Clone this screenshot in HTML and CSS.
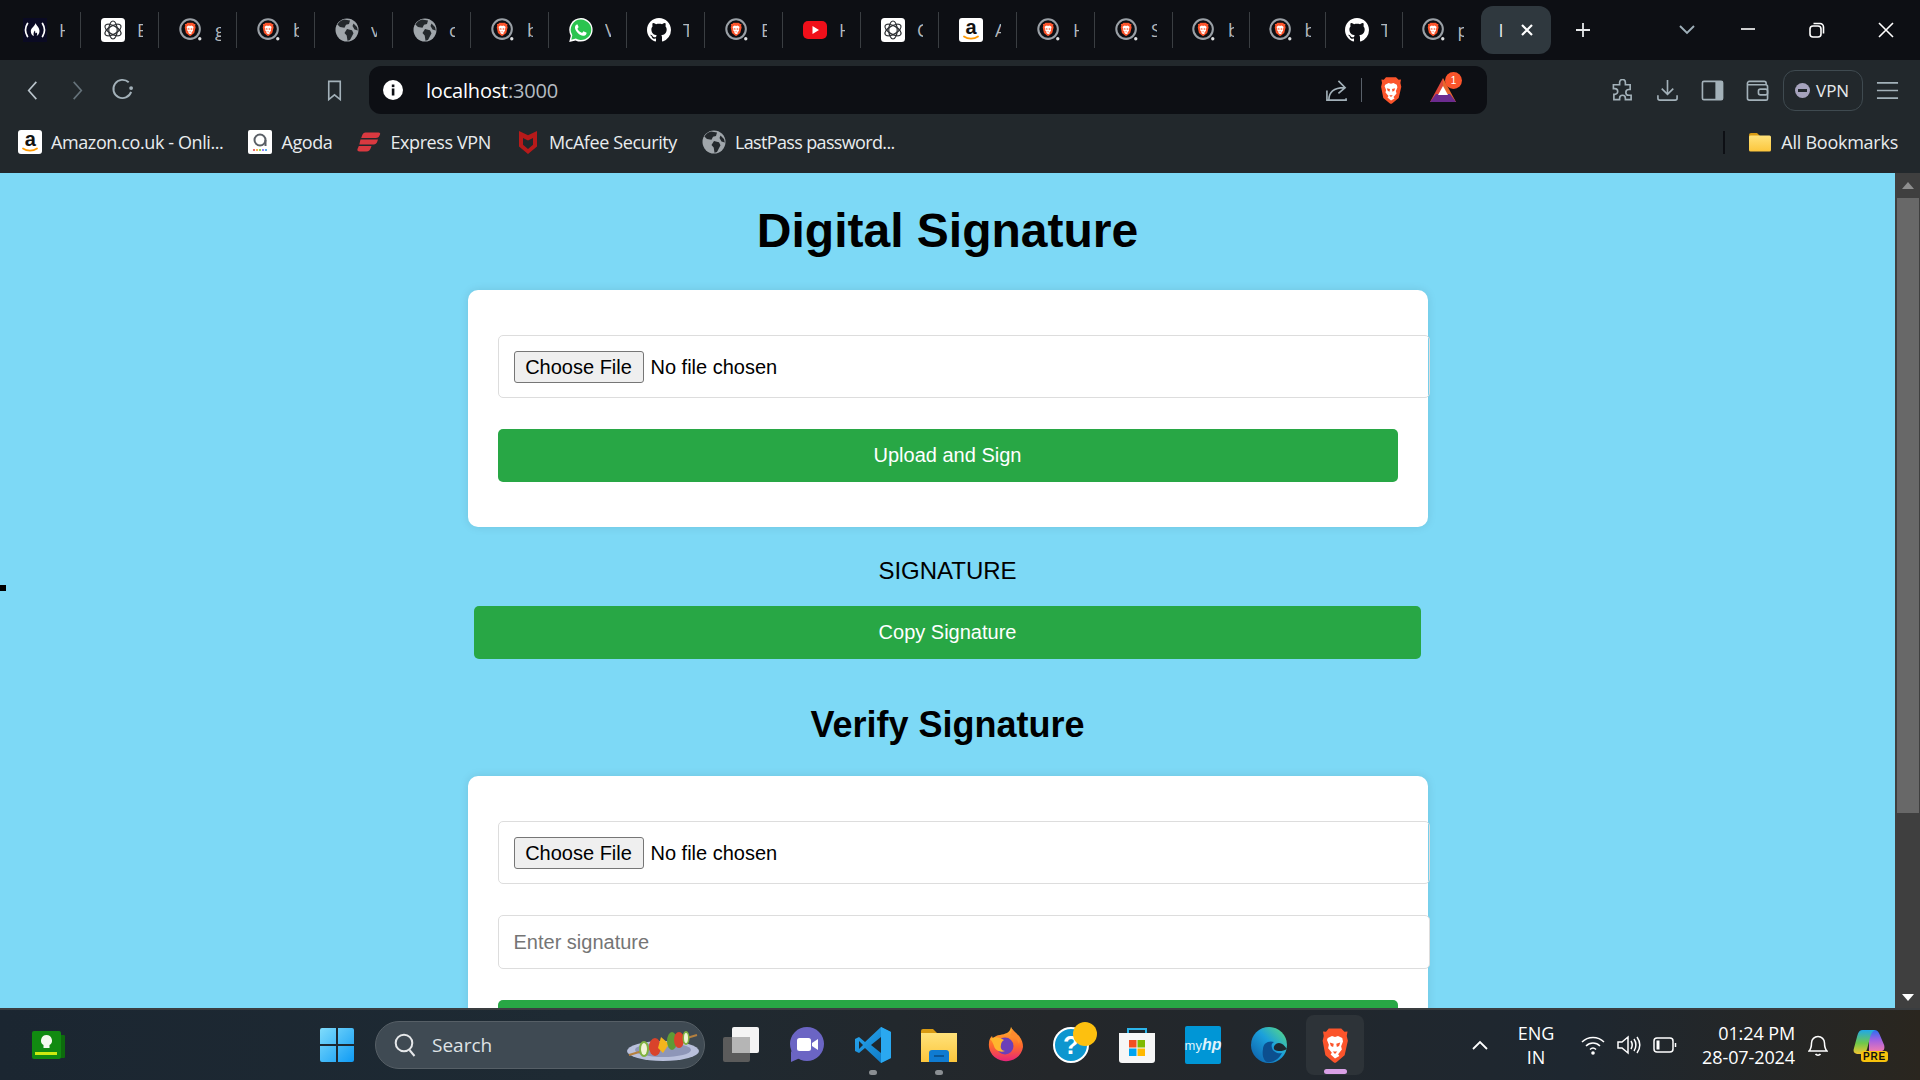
FILE: index.html
```html
<!DOCTYPE html>
<html lang="en">
<head>
  <meta charset="UTF-8">
  <title>Digital Signature</title>
  <link rel="stylesheet" href="styles.css">
</head>
<body>
  <!-- shared icons -->
  <svg class="sprite" width="0" height="0" aria-hidden="true">
    <defs>
      <linearGradient id="win-grad" x1="0" y1="0" x2="1" y2="1"><stop offset="0" stop-color="#7fdcfb"/><stop offset="1" stop-color="#0f9bf5"/></linearGradient>
      <linearGradient id="vs-grad" x1="0" y1="0" x2="1" y2="1"><stop offset="0" stop-color="#2aa8f0"/><stop offset="1" stop-color="#0a74c0"/></linearGradient>
      <linearGradient id="fox-grad" x1="0" y1="0" x2="0" y2="1"><stop offset="0" stop-color="#ffb52e"/><stop offset=".55" stop-color="#ff6a2b"/><stop offset="1" stop-color="#e6247a"/></linearGradient>
      <linearGradient id="edge-grad" x1="0" y1="1" x2="1" y2="0"><stop offset="0" stop-color="#0c59a4"/><stop offset=".55" stop-color="#1ba0dc"/><stop offset="1" stop-color="#5fe07a"/></linearGradient>
      <linearGradient id="folder-grad" x1="0" y1="0" x2="0" y2="1"><stop offset="0" stop-color="#ffe27a"/><stop offset="1" stop-color="#fcc63c"/></linearGradient>
      <linearGradient id="copilot-a" x1="0" y1="0" x2="0" y2="1"><stop offset="0" stop-color="#1fa8ea"/><stop offset=".55" stop-color="#6fc84a"/><stop offset="1" stop-color="#f2c531"/></linearGradient>
      <linearGradient id="copilot-b" x1="0" y1="0" x2="0" y2="1"><stop offset="0" stop-color="#2a6ff0"/><stop offset=".5" stop-color="#a662e0"/><stop offset="1" stop-color="#f07ab0"/></linearGradient>

      <symbol id="i-lion" viewBox="0 0 24 24" preserveAspectRatio="none">
        <path fill="#fb542b" d="M7 1h10l2.6 2.2L22 3l-.6 3 .9 3.2-2.6 9.6L13.4 23.4l-1.4.6-1.4-.6-6.3-4.6L2.1 9.2 3 6l-.6-3 2.4.2z"/>
        <path fill="#fff" d="M6.2 7.4 9.6 6l2.4.7 2.4-.7 3.4 1.4.6 2.2-1.5 3.2.6 2.2-3 3.1 1 1.2L12 21l-3.5-2.6 1-1.2-3-3.1.6-2.2-1.5-3.2z"/>
        <path fill="#fb542b" d="M7.8 10.4l3.2.8-.5 2.2-1.8-.7zM16.2 10.4l-3.2.8.5 2.2 1.8-.7zM10.2 16.4h3.6L12 18z"/>
      </symbol>
      <symbol id="i-brave-tab" viewBox="0 0 26 26">
        <circle cx="12" cy="12" r="10.6" fill="none" stroke="#9aa0a6" stroke-width="2.2"/>
        <use href="#i-lion" x="5" y="4.500" width="14" height="15"/>
        <circle cx="22.5" cy="22.5" r="1.8" fill="#dfe1e3"/>
      </symbol>
      <symbol id="i-globe" viewBox="0 0 24 24">
        <circle cx="12" cy="12" r="11.5" fill="#a0a6ab"/>
        <path fill="#23282c" d="M9 1.4 15 2.6 14 6l-3 .8-1.5 3L5 9 2.4 6.5C4 3.8 6.300 2 9 1.400zM12 11l5 1.300 1.500 3L15 22l-2.500.8-.8-5.300L9.500 15zM18.500 5.500l3.500 3.500.8 3.500-3.300-1-2-3.500z"/>
      </symbol>
      <symbol id="i-openai" viewBox="0 0 24 24">
        <rect width="24" height="24" rx="3.500" fill="#fff"/>
        <g fill="none" stroke="#2c2f33" stroke-width="1.200">
          <ellipse cx="12" cy="12" rx="9" ry="4.200" transform="rotate(30 12 12)"/>
          <ellipse cx="12" cy="12" rx="9" ry="4.200" transform="rotate(90 12 12)"/>
          <ellipse cx="12" cy="12" rx="9" ry="4.200" transform="rotate(150 12 12)"/>
        </g>
      </symbol>
      <symbol id="i-fcc" viewBox="0 0 24 24">
        <rect width="24" height="24" fill="#0a0a23"/>
        <path fill="none" stroke="#fff" stroke-width="1.700" stroke-linecap="round" d="M4.500 5.500C2 9.500 2 14.500 4.500 18.500M19.500 5.500c2.500 4 2.500 9 0 13"/>
        <path fill="#fff" d="M12.500 5c.8 2.500 4 4.200 4 8 0 2.800-2 4.800-3 5 .8-1 1-2.500 0-3.500-.4 1-1 1-1.200 .2-.2-.8 0-1.500-.3-2.200-.8 1-2 2.500-1.200 5.500-1.500-.5-3-2.300-3-4.800 0-3.300 4-4.700 4.700-8.200z"/>
      </symbol>
      <symbol id="i-whatsapp" viewBox="0 0 24 24">
        <path fill="#fff" d="M12 0a11.800 11.800 0 0 0-10.200 17.700L.2 24l6.400-1.600A11.800 11.800 0 1 0 12 0z"/>
        <path fill="#2bc44f" d="M12 1.600a10.200 10.200 0 0 0-8.700 15.600L2.300 21.700l4.600-1.100A10.200 10.200 0 1 0 12 1.600z"/>
        <path fill="#fff" d="M8.500 6.300c-.4 0-1 .2-1.500.8-.6.7-1.100 1.500-1 2.800.2 1.800 1.300 3.500 2.800 5 1.700 1.700 3.600 2.700 5.300 2.900 1.200.1 2.100-.4 2.800-1.100.5-.5.7-1.200.7-1.700 0-.2-.1-.3-.3-.4l-2.400-1.200c-.3-.1-.4-.1-.6.1l-1 1.200c-.2.2-.3.2-.6.100-1.900-.8-3.300-2.100-4.200-3.800-.1-.2-.1-.4.1-.6l.8-1c.2-.2.200-.3.100-.6l-1-2.400c-.1-.3-.3-.3-.5-.3z"/>
      </symbol>
      <symbol id="i-github" viewBox="0 0 16 16">
        <path fill="#fff" d="M8 0C3.580 0 0 3.580 0 8c0 3.540 2.290 6.530 5.470 7.590.4.070.55-.17.55-.38 0-.19-.01-.82-.01-1.490-2.010.37-2.530-.49-2.690-.94-.09-.23-.48-.94-.82-1.130-.28-.15-.68-.52-.01-.53.63-.01 1.080.58 1.230.82.720 1.210 1.870.87 2.330.66.070-.52.28-.87.51-1.070-1.780-.2-3.640-.89-3.640-3.950 0-.87.31-1.590.82-2.150-.08-.2-.36-1.020.08-2.120 0 0 .67-.21 2.200.82.64-.18 1.320-.27 2-.27.68 0 1.360.09 2 .27 1.530-1.040 2.200-.82 2.200-.82.44 1.100.16 1.920.08 2.120.51.56.82 1.270.82 2.150 0 3.070-1.870 3.750-3.650 3.950.29.25.54.73.54 1.480 0 1.070-.01 1.930-.01 2.200 0 .21.15.46.55.38A8.013 8.013 0 0 0 16 8c0-4.420-3.580-8-8-8z"/>
      </symbol>
      <symbol id="i-youtube" viewBox="0 0 24 24">
        <rect y="3" width="24" height="18" rx="5" fill="#f00f1a"/>
        <path fill="#fff" d="M9.500 8v8l6.500-4z"/>
      </symbol>
      <symbol id="i-amazon" viewBox="0 0 24 24">
        <rect width="24" height="24" rx="3" fill="#fff"/>
        <text x="12" y="15.500" text-anchor="middle" class="svg-amazon">a</text>
        <path fill="none" stroke="#f90" stroke-width="1.800" stroke-linecap="round" d="M5 18.500c4 2.700 10 2.700 14 0"/>
      </symbol>
      <symbol id="i-agoda" viewBox="0 0 24 24">
        <rect width="24" height="24" rx="2" fill="#fff"/>
        <circle cx="12" cy="10" r="5.500" fill="none" stroke="#5a5f66" stroke-width="2"/>
        <path stroke="#5a5f66" stroke-width="2" d="M17.500 10v6"/>
        <circle cx="6" cy="20" r="1.100" fill="#e5484d"/><circle cx="9" cy="20" r="1.100" fill="#f5a623"/><circle cx="12" cy="20" r="1.100" fill="#7ed321"/><circle cx="15" cy="20" r="1.100" fill="#7b61ff"/><circle cx="18" cy="20" r="1.100" fill="#2d9cdb"/>
      </symbol>
      <symbol id="i-express" viewBox="0 0 24 24">
        <path fill="#da3940" d="M8.500 2.500h13c1.500 0 2 1 1.500 2l-.6 1.300c-.6 1.400-1.900 2.200-3.400 2.200H4.200l1-2.700c.6-1.700 1.800-2.800 3.300-2.800zM3.500 9.500h17.500l-.9 2.500c-.6 1.600-1.800 2.500-3.300 2.500H2.300zM1.800 16h12.700l-.6 1.800c-.7 2.200-2.100 3.700-4.400 3.700H2.500c-1.700 0-2.500-1-2-2.500z"/>
      </symbol>
      <symbol id="i-mcafee" viewBox="0 0 24 24">
        <path fill="#b71a1a" d="M3 1l9 4.300L21 1v15.500L12 24l-9-7.500z"/>
        <path fill="#22282c" d="M7 8l5 2.400L17 8v6.800l-5 4.200-5-4.200z"/>
      </symbol>
      <symbol id="i-folder" viewBox="0 0 24 20">
        <path fill="#d89a12" d="M1 3a2 2 0 0 1 2-2h6l3 3v4H1z"/>
        <rect x="1" y="3.500" width="22" height="16" rx="1.500" fill="url(#folder-grad)"/>
      </symbol>
    </defs>
  </svg>

  <!-- tab strip -->
  <header class="tabstrip">
    <div class="tab"><svg class="fav"><use href="#i-fcc"/></svg><span class="tab-title">H</span></div>
    <div class="tab"><svg class="fav"><use href="#i-openai"/></svg><span class="tab-title">E</span></div>
    <div class="tab"><svg class="fav"><use href="#i-brave-tab"/></svg><span class="tab-title">g</span></div>
    <div class="tab"><svg class="fav"><use href="#i-brave-tab"/></svg><span class="tab-title">b</span></div>
    <div class="tab"><svg class="fav"><use href="#i-globe"/></svg><span class="tab-title">v</span></div>
    <div class="tab"><svg class="fav"><use href="#i-globe"/></svg><span class="tab-title">c</span></div>
    <div class="tab"><svg class="fav"><use href="#i-brave-tab"/></svg><span class="tab-title">b</span></div>
    <div class="tab"><svg class="fav"><use href="#i-whatsapp"/></svg><span class="tab-title">V</span></div>
    <div class="tab"><svg class="fav"><use href="#i-github"/></svg><span class="tab-title">T</span></div>
    <div class="tab"><svg class="fav"><use href="#i-brave-tab"/></svg><span class="tab-title">E</span></div>
    <div class="tab"><svg class="fav"><use href="#i-youtube"/></svg><span class="tab-title">H</span></div>
    <div class="tab"><svg class="fav"><use href="#i-openai"/></svg><span class="tab-title">C</span></div>
    <div class="tab"><svg class="fav"><use href="#i-amazon"/></svg><span class="tab-title">A</span></div>
    <div class="tab"><svg class="fav"><use href="#i-brave-tab"/></svg><span class="tab-title">H</span></div>
    <div class="tab"><svg class="fav"><use href="#i-brave-tab"/></svg><span class="tab-title">S</span></div>
    <div class="tab tab-small"><svg class="fav"><use href="#i-brave-tab"/></svg><span class="tab-title">b</span></div>
    <div class="tab tab-small"><svg class="fav"><use href="#i-brave-tab"/></svg><span class="tab-title">b</span></div>
    <div class="tab tab-small"><svg class="fav"><use href="#i-github"/></svg><span class="tab-title">T</span></div>
    <div class="tab tab-small tab-last"><svg class="fav"><use href="#i-brave-tab"/></svg><span class="tab-title">p</span></div>
    <div class="tab-active">
      <span class="tab-title">I</span>
      <svg class="tab-close" viewBox="0 0 14 14"><path d="M2 2l10 10M12 2L2 12"/></svg>
    </div>
    <svg class="new-tab" viewBox="0 0 16 16"><path d="M8 1v14M1 8h14"/></svg>
    <div class="win-controls">
      <svg class="win-btn win-chevron" viewBox="0 0 16 16"><path d="M1 4l7 7 7-7"/></svg>
      <svg class="win-btn" viewBox="0 0 16 16"><path d="M1 7h14"/></svg>
      <svg class="win-btn" viewBox="0 0 16 16"><rect x="1" y="4" width="11" height="11" rx="3"/><path d="M4.500 1.500h6.500a3.500 3.500 0 0 1 3.500 3.500v6.500"/></svg>
      <svg class="win-btn" viewBox="0 0 16 16"><path d="M1 1l14 14M15 1L1 15"/></svg>
    </div>
  </header>

  <!-- toolbar -->
  <nav class="toolbar">
    <svg class="tool tool-back" viewBox="0 0 24 24"><path d="M16 3l-8 9 8 9"/></svg>
    <svg class="tool tool-fwd" viewBox="0 0 24 24"><path d="M8 3l8 9-8 9"/></svg>
    <svg class="tool tool-reload" viewBox="0 0 24 24"><path d="M18.500 4.500A9.500 9.500 0 1 0 21 14.500"/><circle class="tool-fill" cx="21" cy="10.500" r="2"/></svg>
    <svg class="tool tool-bookmark" viewBox="0 0 24 24"><path d="M6 2.500h12v19l-6-5-6 5z"/></svg>
    <div class="address-bar">
      <svg class="info-icon" viewBox="0 0 20 20"><circle cx="10" cy="10" r="10" fill="#fff"/><rect x="8.800" y="8.500" width="2.600" height="7" fill="#0d0f14"/><rect x="8.800" y="4.500" width="2.600" height="2.600" fill="#0d0f14"/></svg>
      <span class="url">localhost<span class="url-port">:3000</span></span>
      <svg class="tool tool-share" viewBox="0 0 24 24"><path d="M2 12v10h20v-2M4 22c0-8 5-13 16-13M14 2l7 7-7 6"/></svg>
      <span class="addr-sep"></span>
      <svg class="brave-shield"><use href="#i-lion"/></svg>
      <span class="rewards">
        <svg class="rewards-icon" viewBox="0 0 28 26">
          <path fill="#e0473a" d="M14 1L1 25h13z"/><path fill="#e8662c" d="M14 1l13 24H14z"/>
          <path fill="#6c2b8f" d="M1 25l6-8h14l6 8z"/><path fill="#fff" d="M14 9l5 9H9z"/>
        </svg>
        <span class="rewards-badge">1</span>
      </span>
    </div>
    <svg class="tool tool-ext" viewBox="0 0 24 24"><path d="M9 3.500a3 3 0 0 1 6 0V6h5v5h-1.500a3 3 0 0 0 0 6H21v4.500h-6V20a3 3 0 0 0-6 0v1.500H3V16h1a3 3 0 0 0 0-6H2.500V6H9z"/></svg>
    <svg class="tool" viewBox="0 0 24 24"><path d="M12 1v14M6 10l6 6 6-6M2 17v3a2 2 0 0 0 2 2h16a2 2 0 0 0 2-2v-3"/></svg>
    <svg class="tool" viewBox="0 0 24 24"><rect x="1.500" y="2.500" width="21" height="19" rx="1.500"/><rect class="tool-fill" x="15" y="2.500" width="7.500" height="19"/></svg>
    <svg class="tool" viewBox="0 0 24 24"><path d="M21 6V4.500a2 2 0 0 0-2-2H3.500a2 2 0 0 0-2 2V20a2 2 0 0 0 2 2H21a1.500 1.500 0 0 0 1.500-1.500V8a2 2 0 0 0-2-2H1.500"/><rect x="13" y="10.500" width="9.500" height="6" rx="2"/></svg>
    <div class="vpn-pill"><span class="vpn-dot"></span>VPN</div>
    <svg class="tool tool-menu" viewBox="0 0 24 24"><path d="M1 4h22M1 12h22M1 20h22"/></svg>
  </nav>

  <!-- bookmarks -->
  <div class="bookmarks">
    <div class="bookmark"><svg class="fav"><use href="#i-amazon"/></svg>Amazon.co.uk - Onli...</div>
    <div class="bookmark"><svg class="fav"><use href="#i-agoda"/></svg>Agoda</div>
    <div class="bookmark"><svg class="fav"><use href="#i-express"/></svg>Express VPN</div>
    <div class="bookmark"><svg class="fav"><use href="#i-mcafee"/></svg>McAfee Security</div>
    <div class="bookmark bookmark-lastpass"><svg class="fav"><use href="#i-globe"/></svg>LastPass password...</div>
    <span class="bookmarks-sep"></span>
    <div class="bookmark bookmark-all"><svg class="fav-folder"><use href="#i-folder"/></svg>All Bookmarks</div>
  </div>

  <!-- page -->
  <div class="viewport">
    <main class="page">
      <span class="stray-mark"></span>
      <h1 class="page-title">Digital Signature</h1>
      <form class="card">
        <div class="file-field"><button type="button" class="file-btn">Choose File</button><span>No file chosen</span></div>
        <button type="button" class="green-btn">Upload and Sign</button>
      </form>
      <p class="signature-label">SIGNATURE</p>
      <button type="button" class="green-btn copy-btn">Copy Signature</button>
      <h2 class="section-title">Verify Signature</h2>
      <form class="card">
        <div class="file-field"><button type="button" class="file-btn">Choose File</button><span>No file chosen</span></div>
        <input class="text-field" type="text" placeholder="Enter signature">
        <button type="button" class="green-btn">Verify Signature</button>
      </form>
    </main>
    <div class="scrollbar">
      <span class="arrow-up"></span>
      <span class="scroll-thumb"></span>
      <span class="arrow-down"></span>
    </div>
  </div>

  <!-- taskbar -->
  <footer class="taskbar">
    <svg class="tip-icon" viewBox="0 0 33 28">
      <rect x="28" y="4" width="5" height="23" rx="1" fill="#0d6b0d"/>
      <rect width="29" height="28" rx="2" fill="#118a11"/>
      <path fill="#f4f9ee" d="M14.500 4a5.500 5.500 0 0 0-3 10.100V17h6v-2.900A5.500 5.500 0 0 0 14.500 4z"/>
      <rect x="3" y="21" width="22" height="3" fill="#cdea10"/>
    </svg>
    <svg class="start-icon" viewBox="0 0 36 36">
      <path fill="url(#win-grad)" d="M1 3a2 2 0 0 1 2-2h14v16H1zM19 1h14a2 2 0 0 1 2 2v14H19zM1 19h16v16H3a2 2 0 0 1-2-2zM19 19h16v14a2 2 0 0 1-2 2H19z"/>
    </svg>
    <div class="search-box">
      <svg class="search-icon" viewBox="0 0 22 24"><circle cx="10" cy="10" r="8.300"/><path d="M15.500 17l5 6"/></svg>
      <span class="search-text">Search</span>
      <svg class="search-art" viewBox="0 0 72 32">
        <ellipse cx="36" cy="22" rx="36" ry="10" fill="#b9c0dc"/>
        <ellipse cx="36" cy="21" rx="28" ry="7" fill="#8e96b8"/>
        <path stroke="#b5803f" stroke-width="2" d="M2 26L70 6"/>
        <ellipse cx="17" cy="20" rx="5" ry="8" fill="#7fb23f"/><ellipse cx="17" cy="20" rx="3" ry="6" fill="#f1f4d6"/>
        <ellipse cx="28" cy="18" rx="6" ry="9" fill="#d9432b"/>
        <path fill="#f3b51d" d="M34 8l8 7-6 9-5-5z"/>
        <ellipse cx="45" cy="12" rx="5" ry="9" fill="#5f9a35"/>
        <ellipse cx="52" cy="11" rx="5" ry="8" fill="#d9432b"/>
        <ellipse cx="59" cy="9" rx="3.500" ry="7" fill="#7fb23f"/><ellipse cx="59" cy="9" rx="2" ry="5" fill="#f1f4d6"/>
      </svg>
    </div>
    <div class="task-apps">
      <div class="task-app">
        <svg class="app-icon" viewBox="0 0 36 36"><rect x="0" y="10" width="27" height="25" rx="2" fill="#5b5b5b"/><rect x="9" y="0" width="27" height="26" rx="2" fill="#f4f4f4"/><rect x="9" y="10" width="18" height="16" fill="#b5b5b5"/></svg>
      </div>
      <div class="task-app">
        <svg class="app-icon" viewBox="0 0 36 36"><circle cx="18" cy="17" r="17" fill="#6b65c4"/><path fill="#6b65c4" d="M2 24v11l9-4z"/><rect x="8" y="11" width="14" height="13" rx="2.500" fill="#fff"/><path fill="#fff" d="M23 16l6-4v11l-6-4z"/></svg>
      </div>
      <div class="task-app task-open">
        <svg class="app-icon" viewBox="0 0 36 36"><path fill="url(#vs-grad)" d="M26 0l10 5v26l-10 5L10 21l-6 5-4-2V12l4-2 6 5z"/><path fill="#1f272e" d="M26 10l-10 8 10 8zM4 14v8l4-4z"/><path fill="#2aa8f0" d="M26 0l10 5v26l-10 5z"/></svg>
      </div>
      <div class="task-app task-open">
        <svg class="app-icon" viewBox="0 0 36 36"><path fill="#d89a12" d="M0 4a2 2 0 0 1 2-2h10l4 4v6H0z"/><rect y="6" width="36" height="29" fill="url(#folder-grad)"/><path fill="#0f7bd1" d="M8 26a3 3 0 0 1 3-3h14a3 3 0 0 1 3 3v9H8z"/><rect x="13" y="28" width="10" height="2" fill="#0a5796"/></svg>
      </div>
      <div class="task-app">
        <svg class="app-icon" viewBox="0 0 36 36"><path fill="url(#fox-grad)" d="M24 0c1 3 5 6 8 9 3 4 4 7 4 11a17 16 0 1 1-34-4c0-3 1-5 3-7l1 3c2-3 4-4 7-4 5-1 10-2 11-8z"/><circle cx="18" cy="19" r="8.500" fill="#6b3fb8"/><path fill="#ffb52e" d="M3 12c4-3 10-2 14 1-2 1-3 3-3 5-1 3 1 6 4 6-5 2-10-1-11-5-1-3-2-5-4-7z"/><path fill="#ff8a2e" d="M24 0c1 3 5 6 8 9 1 2 1 5 0 8-2-5-5-8-9-9 2-2 2-5 1-8z"/></svg>
      </div>
      <div class="task-app">
        <span class="help-dot"></span>
        <svg class="app-icon" viewBox="0 0 36 36"><circle cx="18" cy="18" r="17" fill="#0d96cf" stroke="#fff" stroke-width="2"/><text x="18" y="27" text-anchor="middle" class="svg-help">?</text></svg>
      </div>
      <div class="task-app">
        <svg class="app-icon" viewBox="0 0 36 36"><path fill="none" stroke="#2cb4ea" stroke-width="2" d="M9 8V2h18v6"/><path fill="#f6f6f6" d="M0 6h36v27a3 3 0 0 1-3 3H3a3 3 0 0 1-3-3z"/><rect x="10" y="13" width="7.500" height="7.500" fill="#f25022"/><rect x="18.500" y="13" width="7.500" height="7.500" fill="#7fba00"/><rect x="10" y="21.500" width="7.500" height="7.500" fill="#00a4ef"/><rect x="18.500" y="21.500" width="7.500" height="7.500" fill="#ffb900"/></svg>
      </div>
      <div class="task-app">
        <div class="myhp">my<i>hp</i></div>
      </div>
      <div class="task-app">
        <svg class="app-icon" viewBox="0 0 36 36"><circle cx="18" cy="18" r="18" fill="url(#edge-grad)"/><path fill="#1f272e" d="M36 22c-3 2-9 3-12 1-3-2 0-7 4-7 3 0 5 2 8 6z"/><path fill="#0c4f8f" d="M12 22c0-6 6-9 11-7-2 1-3 3-2 6 1 4 6 6 10 5-3 6-9 10-15 9-4-2-5-8-4-13z"/></svg>
      </div>
      <div class="task-app task-active">
        <svg class="app-icon app-brave"><use href="#i-lion"/></svg>
      </div>
    </div>
    <div class="tray">
      <svg class="tray-chevron" viewBox="0 0 16 10"><path d="M1 9l7-7 7 7"/></svg>
      <div class="tray-lang"><span>ENG</span><span>IN</span></div>
      <svg class="tray-icon" viewBox="0 0 24 20"><path d="M1 7c6-6 16-6 22 0M5 11c4-4 10-4 14 0M9 14.500c2-2 4-2 6 0"/><circle class="tray-fill" cx="12" cy="18" r="1.800"/></svg>
      <svg class="tray-icon" viewBox="0 0 24 20"><path d="M1 7h4l6-5v16l-6-5H1zM14 6c1.500 2.500 1.500 5.500 0 8M17 4c2.500 3.500 2.500 8.500 0 12M20 2c3.500 5 3.500 11 0 16"/></svg>
      <svg class="tray-icon" viewBox="0 0 24 20"><rect x="1" y="3" width="19" height="14" rx="3"/><rect class="tray-fill" x="3.500" y="5.500" width="3" height="9"/><path d="M22.500 8v4"/></svg>
      <div class="tray-clock"><span>01:24 PM</span><span>28-07-2024</span></div>
      <svg class="tray-bell" viewBox="0 0 20 24"><path d="M1 18c2-2 2.500-4 2.500-8a6.500 6.500 0 0 1 13 0c0 4 .5 6 2.500 8zM7.500 21c1 1.500 4 1.500 5 0"/></svg>
      <div class="copilot">
        <svg class="copilot-icon" viewBox="0 0 36 28"><path fill="url(#copilot-b)" d="M18 1h6c3 0 5 2 6 5l5 12c1 4 0 7-4 7H18z"/><path fill="url(#copilot-a)" d="M11 1h14c-3 1-5 4-6 9l-3 12c-1 4-3 6-6 6H5c-4 0-5-3-4-6l4-15c1-4 3-6 6-6z"/></svg>
        <span class="pre-badge">PRE</span>
      </div>
    </div>
  </footer>
</body>
</html>
```

FILE: styles.css
```css
* {
  margin: 0;
  padding: 0;
  box-sizing: border-box;
}

html,
body {
  height: 1080px;
  overflow: hidden;
}

body {
  display: flex;
  flex-direction: column;
  font-family: "Liberation Sans", Arial, sans-serif;
  background: #22282c;
}

.sprite {
  position: absolute;
}

svg {
  flex: none;
}

.svg-amazon {
  font: bold 20px "Liberation Sans", sans-serif;
  fill: #111;
}

.svg-help {
  font: bold 26px "Liberation Sans", sans-serif;
  fill: #fff;
}

/* tab strip */
.tabstrip {
  height: 60px;
  flex: none;
  display: flex;
  align-items: center;
  padding-left: 3px;
  background: #0d0f14;
}

.tab {
  width: 78px;
  height: 36px;
  display: flex;
  align-items: center;
  padding-left: 20px;
  border-right: 1px solid #3a3e42;
}

.tab-small {
  width: 76.5px;
  padding-left: 19px;
}

.tab-last {
  border-right: none;
  width: 78px;
}

.fav {
  width: 24px;
  height: 24px;
}

.tab-title {
  width: 6px;
  margin-left: 12px;
  overflow: hidden;
  font-family: "Open Sans", sans-serif;
  font-size: 18px;
  line-height: 24px;
  color: #b4b8bc;
}

.tab-active {
  width: 70px;
  height: 48px;
  display: flex;
  align-items: center;
  padding-left: 5px;
  border-radius: 12px;
  background: #2f383e;
}

.tab-active .tab-title {
  margin-left: 13px;
  color: #e8eaec;
}

.tab-close {
  width: 14px;
  height: 14px;
  margin-left: 15px;
  fill: none;
  stroke: #fff;
  stroke-width: 2.2;
}

.new-tab {
  width: 16px;
  height: 16px;
  margin-left: 24px;
  fill: none;
  stroke: #e6e8ea;
  stroke-width: 1.8;
}

.win-controls {
  margin-left: auto;
  display: flex;
  align-items: center;
  gap: 53px;
  padding-right: 26px;
}

.win-btn {
  width: 16px;
  height: 16px;
  fill: none;
  stroke: #fff;
  stroke-width: 1.6;
}

.win-chevron {
  margin-right: -8px;
  stroke: #9fb0ba;
  stroke-width: 1.9;
}

/* toolbar */
.toolbar {
  height: 60px;
  flex: none;
  display: flex;
  align-items: center;
  padding-left: 21px;
}

.tool {
  width: 23px;
  height: 23px;
  fill: none;
  stroke: #a3b1b9;
  stroke-width: 1.7;
}

.tool-fill {
  fill: #a3b1b9;
  stroke: none;
}

.tool-back {
  stroke: #b9c4cb;
}

.tool-fwd {
  margin-left: 22px;
  stroke: #65727a;
}

.tool-reload {
  margin-left: 22px;
  margin-top: -2px;
  stroke-width: 2;
}

.tool-bookmark {
  margin-left: 189px;
}

.address-bar {
  width: 1118px;
  height: 48px;
  margin-left: 23px;
  display: flex;
  align-items: center;
  padding-left: 14px;
  border-radius: 12px;
  background: #0d0f14;
}

.info-icon {
  width: 20px;
  height: 20px;
}

.url {
  margin-left: 23px;
  font-family: "Open Sans", sans-serif;
  font-size: 20px;
  letter-spacing: -0.2px;
  color: #fff;
}

.url-port {
  color: #b5bcc2;
}

.tool-share {
  margin-left: auto;
}

.addr-sep {
  width: 1px;
  height: 24px;
  margin-left: 13px;
  background: #59616a;
}

.brave-shield {
  width: 24px;
  height: 28px;
  margin-left: 17px;
}

.rewards {
  position: relative;
  width: 28px;
  height: 26px;
  margin-left: 26px;
  margin-right: 30px;
}

.rewards-icon {
  width: 28px;
  height: 26px;
}

.rewards-badge {
  position: absolute;
  top: -5px;
  left: 16px;
  width: 17px;
  height: 17px;
  border-radius: 50%;
  background: #fb542b;
  font-size: 10px;
  line-height: 17px;
  text-align: center;
  color: #fff;
}

.tool-ext {
  margin-left: 124px;
}

.toolbar .tool + .tool:not(.tool-fwd):not(.tool-reload):not(.tool-bookmark) {
  margin-left: 22px;
}

.vpn-pill {
  width: 80px;
  height: 41px;
  margin-left: 14px;
  display: flex;
  align-items: center;
  gap: 6px;
  padding-left: 11px;
  border: 1px solid #3f4a50;
  border-radius: 12px;
  font-family: "Open Sans", sans-serif;
  font-size: 17px;
  color: #e6e9eb;
}

.vpn-dot {
  position: relative;
  width: 15px;
  height: 15px;
  flex: none;
  border-radius: 50%;
  background: #a6a3bd;
}

.vpn-dot::after {
  content: "";
  position: absolute;
  top: 6px;
  left: 3px;
  width: 9px;
  height: 3px;
  background: #22282c;
}

.tool-menu {
  margin-left: 13px;
}

/* bookmarks */
.bookmarks {
  height: 53px;
  flex: none;
  display: flex;
  align-items: center;
  padding: 0 22px 9px 18px;
}

.bookmark {
  display: flex;
  align-items: center;
  gap: 9px;
  margin-right: 25px;
  font-family: "Open Sans", sans-serif;
  font-size: 18px;
  letter-spacing: -0.4px;
  white-space: nowrap;
  color: #e9ecee;
}

.bookmark-lastpass {
  letter-spacing: -0.65px;
}

.bookmarks-sep {
  width: 2px;
  height: 23px;
  margin-left: auto;
  background: #0d0f14;
}

.bookmark-all {
  margin-left: 23px;
  margin-right: 0;
  letter-spacing: -0.25px;
}

.fav-folder {
  width: 24px;
  height: 20px;
}

/* page */
.viewport {
  height: 835px;
  flex: none;
  display: flex;
  overflow: hidden;
}

.page {
  position: relative;
  flex: 1;
  display: flex;
  flex-direction: column;
  align-items: center;
  background: #7dd9f6;
}

.stray-mark {
  position: absolute;
  top: 412px;
  left: 0;
  width: 6px;
  height: 6px;
  background: #000;
}

.page-title {
  margin-top: 30px;
  font-size: 48px;
  line-height: 56px;
  font-weight: bold;
  color: #000;
}

.card {
  width: 960px;
  margin-top: 31px;
  flex: none;
  display: flex;
  flex-direction: column;
  gap: 31px;
  padding: 45px 30px;
  border-radius: 10px;
  background: #fff;
  box-shadow: 0 0 10px rgba(0, 0, 0, 0.1);
}

.file-field {
  width: 932px;
  height: 63px;
  display: flex;
  align-items: center;
  gap: 7px;
  padding: 1px 0 0 15px;
  border: 1px solid #ddd;
  border-radius: 5px;
  font-size: 20px;
  color: #000;
}

.file-btn {
  width: 130px;
  height: 32px;
  border: 1px solid #767676;
  border-radius: 3px;
  background: #efefef;
  font: 20px "Liberation Sans", sans-serif;
  color: #000;
}

.text-field {
  width: 932px;
  height: 54px;
  padding: 0 15px;
  border: 1px solid #ddd;
  border-radius: 5px;
  font: 20px "Liberation Sans", sans-serif;
}

.text-field::placeholder {
  color: #757575;
}

.green-btn {
  width: 900px;
  height: 53px;
  flex: none;
  border: none;
  border-radius: 5px;
  background: #28a745;
  font: 20px "Liberation Sans", sans-serif;
  color: #fff;
}

.signature-label {
  margin-top: 30px;
  font-size: 24px;
  line-height: 28px;
  color: #000;
}

.copy-btn {
  width: 947px;
  margin-top: 21px;
}

.section-title {
  margin-top: 45px;
  font-size: 36px;
  line-height: 42px;
  font-weight: bold;
  color: #000;
}

.section-title + .card {
  margin-top: 30px;
}

.scrollbar {
  position: relative;
  width: 25px;
  flex: none;
  display: flex;
  flex-direction: column;
  align-items: center;
  background: #3f3f3f;
}

.scroll-thumb {
  width: 22px;
  height: 615px;
  margin-top: 9px;
  background: #686868;
}

.arrow-up,
.arrow-down {
  width: 0;
  height: 0;
  border-left: 6px solid transparent;
  border-right: 6px solid transparent;
}

.arrow-up {
  margin-top: 9px;
  border-bottom: 7px solid #8e8e8e;
}

.arrow-down {
  margin-top: auto;
  margin-bottom: 7px;
  border-top: 7px solid #fff;
}

/* taskbar */
.taskbar {
  height: 72px;
  flex: none;
  display: flex;
  align-items: center;
  padding-left: 32px;
  border-top: 2px solid #3a3d40;
  background: linear-gradient(90deg, #1b2631 0%, #1e2a33 30%, #24272a 55%, #1e2730 82%, #2a261f 100%);
}

.tip-icon {
  width: 33px;
  height: 28px;
}

.start-icon {
  width: 36px;
  height: 36px;
  margin-left: 254px;
}

.search-box {
  width: 330px;
  height: 48px;
  margin-left: 20px;
  display: flex;
  align-items: center;
  padding-left: 18px;
  border: 1px solid #565f66;
  border-radius: 24px;
  background: #3f4a53;
}

.search-icon {
  width: 22px;
  height: 24px;
  fill: none;
  stroke: #e6e8ea;
  stroke-width: 2;
}

.search-text {
  margin-left: 16px;
  font-family: "Open Sans", sans-serif;
  font-size: 19px;
  color: #dfe3e6;
}

.search-art {
  width: 72px;
  height: 32px;
  margin-left: auto;
  margin-right: 5px;
}

.task-apps {
  display: flex;
  margin-left: 3px;
}

.task-app {
  position: relative;
  width: 66px;
  height: 60px;
  display: flex;
  align-items: center;
  justify-content: center;
}

.app-icon {
  width: 36px;
  height: 36px;
}

.app-brave {
  width: 30px;
  height: 36px;
}

.task-open::after {
  content: "";
  position: absolute;
  bottom: 0;
  left: 29px;
  width: 8px;
  height: 5px;
  border-radius: 3px;
  background: #8b8f93;
}

.task-active {
  width: 58px;
  margin-left: 4px;
  border-radius: 8px;
  background: #2d3338;
}

.task-active::after {
  content: "";
  position: absolute;
  bottom: 1px;
  left: 18px;
  width: 23px;
  height: 5px;
  border-radius: 3px;
  background: #d9a0e6;
}

.help-dot {
  position: absolute;
  top: 7px;
  left: 35px;
  z-index: 1;
  width: 24px;
  height: 24px;
  border-radius: 50%;
  background: #fdc00f;
}

.myhp {
  width: 36px;
  height: 38px;
  display: flex;
  align-items: center;
  justify-content: center;
  border-radius: 2px;
  background: #0096d6;
  font-size: 13px;
  color: #dff2fb;
}

.myhp i {
  font-size: 16px;
  font-weight: bold;
}

.tray {
  margin-left: 108px;
  display: flex;
  align-items: center;
  color: #fff;
  font-family: "Open Sans", sans-serif;
}

.tray-chevron {
  width: 16px;
  height: 10px;
  fill: none;
  stroke: #fff;
  stroke-width: 1.8;
}

.tray-lang {
  width: 36px;
  margin-left: 30px;
  display: flex;
  flex-direction: column;
  align-items: center;
  font-size: 18px;
  line-height: 24px;
}

.tray-icon {
  width: 24px;
  height: 20px;
  margin-left: 12px;
  fill: none;
  stroke: #fff;
  stroke-width: 1.5;
}

.tray-lang + .tray-icon {
  margin-left: 27px;
}

.tray-fill {
  fill: #fff;
  stroke: none;
}

.tray-clock {
  width: 100px;
  margin-left: 18px;
  display: flex;
  flex-direction: column;
  align-items: flex-end;
  font-size: 18px;
  letter-spacing: -0.1px;
  line-height: 24px;
}

.tray-bell {
  width: 20px;
  height: 24px;
  margin-left: 13px;
  fill: none;
  stroke: #fff;
  stroke-width: 1.5;
}

.copilot {
  position: relative;
  width: 36px;
  height: 34px;
  margin-left: 25px;
}

.copilot-icon {
  width: 32px;
  height: 27px;
}

.pre-badge {
  position: absolute;
  right: 1px;
  bottom: 0;
  width: 27px;
  height: 11px;
  border-radius: 3px;
  background: #f7c20c;
  font: bold 10px/11px "Liberation Sans", sans-serif;
  letter-spacing: 0.8px;
  text-align: center;
  color: #111;
}
```
